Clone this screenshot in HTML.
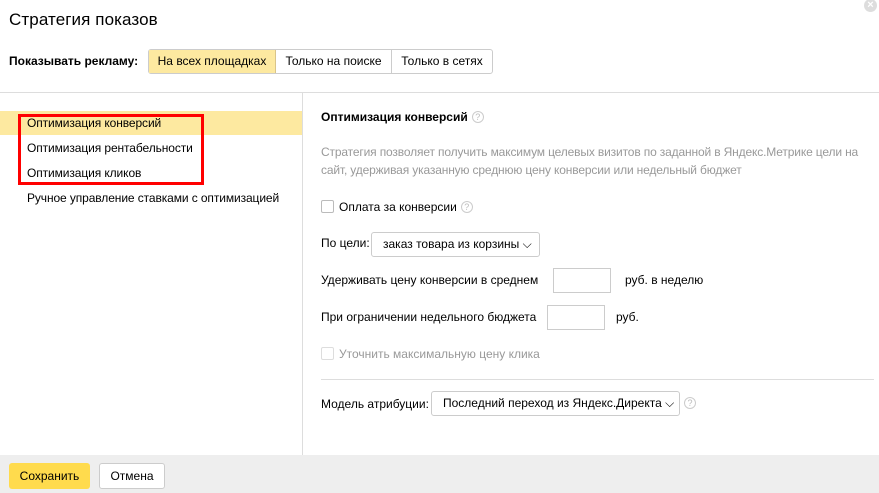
<!DOCTYPE html>
<html><head><meta charset="utf-8"><style>
*{margin:0;padding:0;box-sizing:border-box}
body{width:879px;height:493px;background:#fff;font-family:"Liberation Sans",sans-serif;font-size:12px;color:#000;position:relative;overflow:hidden}
.a{position:absolute;white-space:nowrap}
.q{display:inline-block;width:12px;height:12px;border:1px solid #ccc;border-radius:50%;font-size:9px;color:#bbb;text-align:center;line-height:10px;vertical-align:1px;margin-left:4px}
.cb{position:absolute;width:13px;height:13px;border:1px solid #bbb;border-radius:2px;background:#fff}
.inp{position:absolute;border:1px solid #ccc;background:#fff}
.sel{position:absolute;border:1px solid #ccc;border-radius:3px;background:#fff;height:25px;line-height:23px;padding-left:11px}
</style></head><body>
<div class="a" style="left:9px;top:10px;font-size:17px;letter-spacing:0.1px">Стратегия показов</div>
<div class="a" style="left:864px;top:-1px;width:13px;height:13px;border-radius:50%;background:#ddd;color:#fff;font-size:11px;line-height:12px;text-align:center;font-weight:bold">×</div>
<div class="a" style="left:9px;top:54px;font-weight:bold;font-size:12px">Показывать рекламу:</div>
<div class="a" style="left:148px;top:49px;height:25px;border:1px solid #ccc;border-radius:3px;display:flex;line-height:23px;font-size:12px">
<div style="background:#fde9a0;border-right:1px solid #d9c48a;width:127px;text-align:center">На всех площадках</div>
<div style="width:116px;text-align:center;border-right:1px solid #ccc">Только на поиске</div>
<div style="width:100px;text-align:center">Только в сетях</div></div>
<div class="a" style="left:0;top:92px;width:879px;height:1px;background:#ddd"></div>
<div class="a" style="left:302px;top:93px;width:1px;height:362px;background:#ddd"></div>
<div class="a" style="left:0;top:111px;width:302px;height:24px;background:#fde9a0"></div>
<div class="a" style="left:27px;top:116px;letter-spacing:-0.1px">Оптимизация конверсий</div>
<div class="a" style="left:27px;top:141px;letter-spacing:-0.1px">Оптимизация рентабельности</div>
<div class="a" style="left:27px;top:166px;letter-spacing:-0.1px">Оптимизация кликов</div>
<div class="a" style="left:27px;top:191px;letter-spacing:-0.1px">Ручное управление ставками с оптимизацией</div>
<div class="a" style="left:18px;top:114px;width:186px;height:71px;border:3px solid #f00"></div>
<div class="a" style="left:321px;top:110px;font-weight:bold">Оптимизация конверсий<span class="q" style="font-weight:normal">?</span></div>
<div class="a" style="left:321px;top:143px;color:#999;line-height:18px;white-space:normal;width:555px;letter-spacing:-0.15px">Стратегия позволяет получить максимум целевых визитов по заданной в Яндекс.Метрике цели на сайт, удерживая указанную среднюю цену конверсии или недельный бюджет</div>
<div class="cb" style="left:321px;top:200px"></div>
<div class="a" style="left:339px;top:200px">Оплата за конверсии<span class="q">?</span></div>
<div class="a" style="left:321px;top:236px">По цели:</div>
<div class="sel" style="left:371px;top:232px;width:169px">заказ товара из корзины ⌵</div>
<div class="a" style="left:321px;top:273px">Удерживать цену конверсии  в среднем</div>
<div class="inp" style="left:553px;top:268px;width:58px;height:25px"></div>
<div class="a" style="left:625px;top:273px">руб. в неделю</div>
<div class="a" style="left:321px;top:310px">При ограничении недельного бюджета</div>
<div class="inp" style="left:547px;top:305px;width:58px;height:25px"></div>
<div class="a" style="left:616px;top:310px">руб.</div>
<div class="cb" style="left:321px;top:347px;border-color:#ddd"></div>
<div class="a" style="left:339px;top:347px;color:#999">Уточнить максимальную цену клика</div>
<div class="a" style="left:321px;top:379px;width:553px;height:1px;background:#ddd"></div>
<div class="a" style="left:321px;top:397px">Модель атрибуции:</div>
<div class="sel" style="left:431px;top:391px;width:249px">Последний переход из Яндекс.Директа ⌵</div>
<div class="a" style="left:680px;top:396px"><span class="q">?</span></div>
<div class="a" style="left:0;top:455px;width:879px;height:38px;background:#eee"></div>
<div class="a" style="left:9px;top:463px;width:81px;height:26px;background:#ffdb4d;border-radius:3px;text-align:center;line-height:26px">Сохранить</div>
<div class="a" style="left:99px;top:463px;width:66px;height:26px;background:#fff;border:1px solid #ccc;border-radius:3px;text-align:center;line-height:24px">Отмена</div>
</body></html>
